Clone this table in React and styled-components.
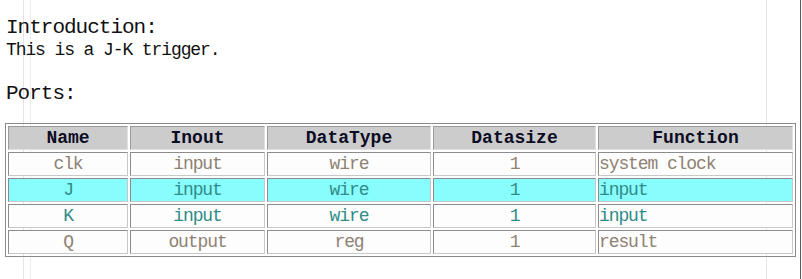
import React from "react";
import styled, { createGlobalStyle } from "styled-components";

const ports = [
  { name: "clk", inout: "input", type: "wire", size: 1, fn: "system clock", tone: "gray" },
  { name: "J", inout: "input", type: "wire", size: 1, fn: "input", tone: "teal", active: true },
  { name: "K", inout: "input", type: "wire", size: 1, fn: "input", tone: "teal" },
  { name: "Q", inout: "output", type: "reg", size: 1, fn: "result", tone: "gray" },
];

const columns = [
  { key: "name", title: "Name", width: 120 },
  { key: "inout", title: "Inout", width: 135 },
  { key: "type", title: "DataType", width: 164 },
  { key: "size", title: "Datasize", width: 163 },
  { key: "fn", title: "Function", width: 195, left: true },
];

const tones = {
  gray: "#8e8274",
  teal: "#2f8c88",
};

const GlobalStyle = createGlobalStyle`
  html, body {
    margin: 0;
    padding: 0;
    background: #ffffff;
  }
`;

const Page = styled.div`
  width: 802px;
  height: 279px;
  box-sizing: border-box;
  padding: 16px 0 0 5px;
  font-family: "Liberation Mono", "DejaVu Sans Mono", monospace;
  color: #111111;
  background-color: #ffffff;
  background-image:
    linear-gradient(to right, transparent 800px, #5a5a5a 800px, #5a5a5a 801px, transparent 801px),
    linear-gradient(to right, transparent 766px, #e6e6e6 766px, #e6e6e6 767px, transparent 767px),
    linear-gradient(to right, transparent 23px, #e4e4e4 23px, #e4e4e4 24px, transparent 24px),
    linear-gradient(to right, transparent 30px, #ececec 30px, #ececec 31px, transparent 31px);
  overflow: hidden;
`;

const Heading = styled.div`
  font-size: 21px;
  line-height: 24px;
  letter-spacing: -1px;
  padding-left: 1px;
  margin-top: ${(p) => p.$gap || 0}px;
`;

const Text = styled.div`
  font-size: 18px;
  line-height: 20px;
  letter-spacing: -1.1px;
  padding-left: 1px;
`;

const Table = styled.table`
  margin-top: 17px;
  border: 1px solid #8a8a8a;
  border-spacing: 2px;
  table-layout: fixed;
  width: 790px;
`;

const HeadCell = styled.th`
  width: ${(p) => p.$width - 2}px;
  height: 22px;
  padding: 0;
  background: #cccccc;
  border: 1px solid;
  border-color: #9a9a9a #e0e0e0 #e0e0e0 #9a9a9a;
  font-size: 18px;
  font-weight: bold;
  line-height: 20px;
  color: #0c0c24;
  text-align: center;
`;

const Row = styled.tr`
  background: ${(p) => (p.$active ? "#88fdfd" : "#fdfdfd")};
  color: ${(p) => tones[p.$tone]};
`;

const Cell = styled.td`
  height: 22px;
  padding: 0;
  border: 1px solid;
  border-color: #8c8c8c #c8c8c8 #c8c8c8 #8c8c8c;
  font-size: 18px;
  line-height: 20px;
  letter-spacing: -1.1px;
  text-align: ${(p) => (p.$left ? "left" : "center")};
  white-space: nowrap;
  overflow: hidden;
`;

export default function App() {
  return (
    <Page>
      <GlobalStyle />
      <Heading>Introduction:</Heading>
      <Text>This is a J-K trigger.</Text>
      <Heading $gap={22}>Ports:</Heading>
      <Table>
        <thead>
          <tr>
            {columns.map((c) => (
              <HeadCell key={c.key} $width={c.width}>
                {c.title}
              </HeadCell>
            ))}
          </tr>
        </thead>
        <tbody>
          {ports.map((p) => (
            <Row key={p.name} $active={p.active} $tone={p.tone}>
              {columns.map((c) => (
                <Cell key={c.key} $left={c.left}>
                  {p[c.key]}
                </Cell>
              ))}
            </Row>
          ))}
        </tbody>
      </Table>
    </Page>
  );
}
